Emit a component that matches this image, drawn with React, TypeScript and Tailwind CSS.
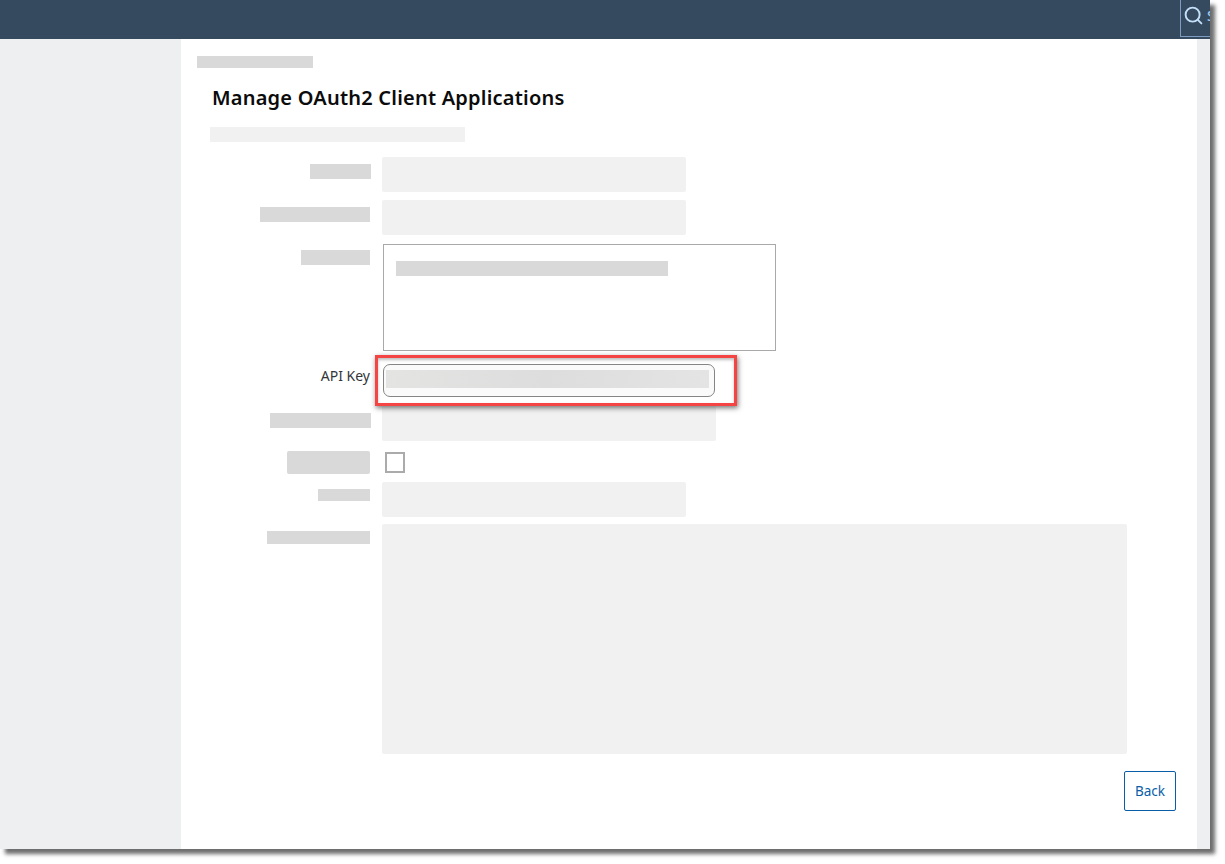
import * as React from 'react';
import { Search } from 'lucide-react';

// grey placeholder that stands in for a redacted label
function LabelBar({ className }: { className: string }) {
  return <div className={`bg-[#d9d9d9] ${className}`} />;
}

function Field({ className }: { className: string }) {
  return <div className={`rounded-[2px] bg-[#f1f1f1] ${className}`} />;
}

export default function App() {
  return (
    <div className="h-screen w-full overflow-hidden bg-white font-['Noto_Sans','Liberation_Sans',sans-serif]">
      <div className="flex h-[849px] w-[1210px] flex-col shadow-[5px_5px_4px_rgba(60,60,60,0.75)]">
        {/* Header */}
        <div className="flex h-[39px] shrink-0 justify-end bg-[#354a5f]">
          <div className="flex h-[37px] w-[30px] items-start overflow-hidden border-b border-l border-[#7d9cc0] pl-[2px] pt-[5px]">
            <Search className="h-[21px] w-[21px] shrink-0 text-[#c4e0f8]" strokeWidth={2.2} />
            <span className="ml-[3px] text-[14px] font-medium leading-[22px] text-[#9ccbf2]">Search</span>
          </div>
        </div>

        <div className="flex min-h-0 flex-1">
          <div className="w-[181px] shrink-0 bg-[#edeff0]" />

          {/* Main */}
          <div className="flex-1 bg-white pt-[17px]">
            <div className="ml-[16px] h-[12px] w-[116px] bg-[#d9d9d9]" />
            <h1 className="ml-[31px] mt-[16px] h-[28px] text-[20px] font-semibold leading-[28px] tracking-[0.22px] text-[#0b0b0b]">
              Manage OAuth2 Client Applications
            </h1>
            <div className="ml-[29px] mt-[15px] h-[15px] w-[255px] bg-[#f1f1f1]" />

            <div className="mt-[15px] flex h-[35px]">
              <div className="flex w-[190px] justify-end pt-[7px]">
                <LabelBar className="h-[15px] w-[61px]" />
              </div>
              <Field className="ml-[11px] w-[304px]" />
            </div>

            <div className="mt-[8px] flex h-[35px]">
              <div className="flex w-[189px] justify-end pt-[7px]">
                <LabelBar className="h-[15px] w-[110px]" />
              </div>
              <Field className="ml-[12px] w-[304px]" />
            </div>

            <div className="mt-[9px] flex h-[107px]">
              <div className="flex w-[189px] justify-end pt-[6px]">
                <LabelBar className="h-[15px] w-[69px]" />
              </div>
              <div className="ml-[13px] h-full w-[393px] border border-[#a9a9a9] pl-[12px] pt-[16px]">
                <div className="h-[15px] w-[272px] bg-[#d9d9d9]" />
              </div>
            </div>

            {/* API key row, called out with the red box */}
            <div className="relative mt-[13px] flex h-[33px]">
              <div className="flex w-[189px] justify-end pt-[3px] text-[14px] leading-[18px] text-[#32363a]">
                API Key
              </div>
              <div className="ml-[13px] h-full w-[332px] rounded-[7px] border border-[#858585] bg-[#fafafa] pl-[2px] pt-[5px]">
                <div className="h-[18px] w-[323px] bg-gradient-to-r from-[#e4e5e3] via-[#dcdddc] to-[#e3e4e3] blur-[0.6px]" />
              </div>
              <div className="absolute left-[194px] top-[-9px] h-[51px] w-[362px] border-[3px] border-[#f54444] shadow-[1px_2px_5px_rgba(60,60,60,0.7),inset_0_2px_3px_rgba(70,70,70,0.35)]" />
            </div>

            <div className="mt-[9px] flex h-[35px]">
              <div className="flex w-[190px] justify-end pt-[7px]">
                <LabelBar className="h-[15px] w-[101px]" />
              </div>
              <Field className="ml-[11px] w-[334px]" />
            </div>

            <div className="mt-[10px] flex h-[23px]">
              <div className="flex w-[189px] justify-end">
                <LabelBar className="h-[23px] w-[83px] rounded-[2px]" />
              </div>
              <div className="ml-[15px] mt-px h-[21px] w-[20px] border-2 border-[#ababab] bg-white" />
            </div>

            <div className="mt-[8px] flex h-[35px]">
              <div className="flex w-[189px] justify-end pt-[7px]">
                <LabelBar className="h-[12px] w-[52px]" />
              </div>
              <Field className="ml-[12px] w-[304px]" />
            </div>

            <div className="mt-[7px] flex h-[230px]">
              <div className="flex w-[189px] justify-end pt-[7px]">
                <LabelBar className="h-[13px] w-[103px]" />
              </div>
              <Field className="ml-[12px] w-[745px]" />
            </div>

            <div className="mr-[21px] mt-[17px] flex justify-end">
              <button className="h-[40px] w-[52px] rounded-[2px] border border-[#0a5ea8] bg-white text-[13.5px] text-[#0a5ea8]">
                Back
              </button>
            </div>
          </div>

          <div className="w-[13px] shrink-0 bg-[#edeff0]" />
        </div>
      </div>
    </div>
  );
}
